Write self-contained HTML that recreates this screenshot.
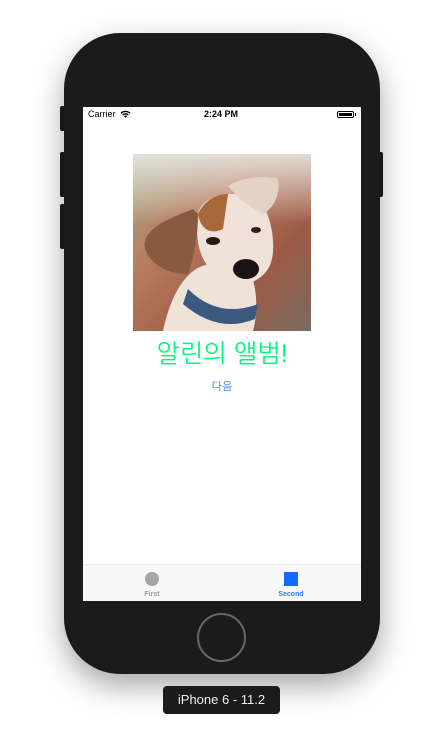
<!DOCTYPE html>
<html><head><meta charset="utf-8"><style>
*{margin:0;padding:0;box-sizing:border-box}
body{width:444px;height:756px;background:#fff;position:relative;overflow:hidden;font-family:"Liberation Sans","NanumGothic",sans-serif}
.phone{position:absolute;left:64px;top:33px;width:316px;height:641px;background:#1b1b1b;border-radius:56px;box-shadow:0 12px 30px rgba(0,0,0,.35)}
.btn{position:absolute;background:#1b1b1b;border-radius:2px}
.screen{position:absolute;left:83px;top:107px;width:278px;height:494px;background:#fff;overflow:hidden}
.sb{position:absolute;top:0;left:0;width:278px;height:16px;font-size:9px;color:#000}
.tab{position:absolute;left:0;top:457px;width:278px;height:37px;background:#f8f8f8;border-top:1px solid #eee}
.home{position:absolute;left:197px;top:613px;width:49px;height:49px;border:2px solid #666;border-radius:50%}
.label{position:absolute;left:163px;top:686px;width:117px;height:28px;background:#1b1b1b;border-radius:4px;color:#eee;font-size:13px;text-align:center;line-height:28px}
</style></head><body>
<div class="btn" style="left:60px;top:106px;width:5px;height:25px"></div>
<div class="btn" style="left:60px;top:152px;width:5px;height:45px"></div>
<div class="btn" style="left:60px;top:204px;width:5px;height:45px"></div>
<div class="btn" style="left:378px;top:152px;width:5px;height:45px"></div>
<div class="phone"></div>
<div class="screen">
 <div class="sb"><span style="position:absolute;left:5px;top:2px">Carrier</span>
  <svg style="position:absolute;left:37px;top:3px" width="11" height="8" viewBox="0 0 11 8"><path d="M0.5 2.8a7 7 0 0 1 10 0L9.5 3.8a5.6 5.6 0 0 0-8 0z M2.2 4.5a4.6 4.6 0 0 1 6.6 0L7.8 5.5a3.2 3.2 0 0 0-4.6 0z M3.9 6.2a2.2 2.2 0 0 1 3.2 0L5.5 7.8z" fill="#000"/></svg>
  <span style="position:absolute;left:121px;top:2px;font-weight:bold">2:24 PM</span>
  <div style="position:absolute;left:254px;top:4px;width:17px;height:7px;border:1px solid #000;border-radius:2px;padding:1px"><div style="width:100%;height:100%;background:#000"></div></div>
  <div style="position:absolute;left:272px;top:6px;width:1px;height:3px;background:#000"></div>
 </div>
 <svg style="position:absolute;left:50px;top:47px" width="178" height="177" viewBox="0 0 178 177">
  <defs><linearGradient id="bg" x1="0" y1="0" x2="1" y2="1"><stop offset="0" stop-color="#a8ad8a"/><stop offset=".35" stop-color="#b97a5e"/><stop offset=".7" stop-color="#9c5a45"/><stop offset="1" stop-color="#7a6a60"/></linearGradient>
  <linearGradient id="sky" x1="0" y1="0" x2="0" y2="1"><stop offset="0" stop-color="#e8e8e3" stop-opacity=".9"/><stop offset="1" stop-color="#e8e8e3" stop-opacity="0"/></linearGradient></defs>
  <rect width="178" height="177" fill="url(#bg)"/>
  <rect width="178" height="70" fill="url(#sky)"/>
  <path d="M30 177 C40 130 60 110 80 110 L115 115 C125 130 125 160 120 177Z" fill="#efe3d8"/>
  <path d="M55 135 Q85 165 125 150 L122 165 Q85 180 50 150Z" fill="#3a5880"/>
  <path d="M65 60 C70 40 100 35 125 45 C140 60 145 100 135 115 C125 130 105 135 95 125 C75 120 60 100 65 60Z" fill="#f0e2d8"/>
  <path d="M65 60 C72 45 85 40 95 40 L90 75 C80 80 68 78 65 60Z" fill="#a8683a"/>
  <path d="M60 55 C35 65 8 75 12 95 C20 115 40 120 55 120 C62 100 65 80 65 60Z" fill="#8a5a40"/>
  <path d="M95 32 C105 25 130 20 145 25 C148 40 140 55 130 60 C120 55 105 45 95 32Z" fill="#e4d2c6"/>
  <ellipse cx="80" cy="87" rx="7" ry="4" fill="#2a1a14"/>
  <ellipse cx="123" cy="76" rx="5" ry="3" fill="#3a1a14"/>
  <ellipse cx="113" cy="115" rx="13" ry="10" fill="#1a1214"/>
 </svg>
 <div style="position:absolute;left:0;top:231px;width:278px;text-align:center;font-size:25px;color:#00f87a;font-family:'Liberation Sans','NanumGothic','Noto Sans CJK KR',sans-serif">알린의 앨범!</div>
 <div style="position:absolute;left:0;top:273px;width:278px;text-align:center;font-size:11px;color:#2f7cf6;font-family:'Liberation Sans','NanumGothic','Noto Sans CJK KR',sans-serif">다음</div>
 <div class="tab">
  <div style="position:absolute;left:62px;top:7px;width:14px;height:14px;border-radius:50%;background:#a6a6a6"></div>
  <div style="position:absolute;left:49px;top:26px;width:40px;text-align:center;font-size:7px;color:#999;font-weight:bold">First</div>
  <div style="position:absolute;left:201px;top:7px;width:14px;height:14px;background:#0f6cff"></div>
  <div style="position:absolute;left:188px;top:26px;width:40px;text-align:center;font-size:7px;color:#2f7cf6;font-weight:bold">Second</div>
 </div>
</div>
<div class="home"></div>
<div class="label">iPhone 6 - 11.2</div>
</body></html>
